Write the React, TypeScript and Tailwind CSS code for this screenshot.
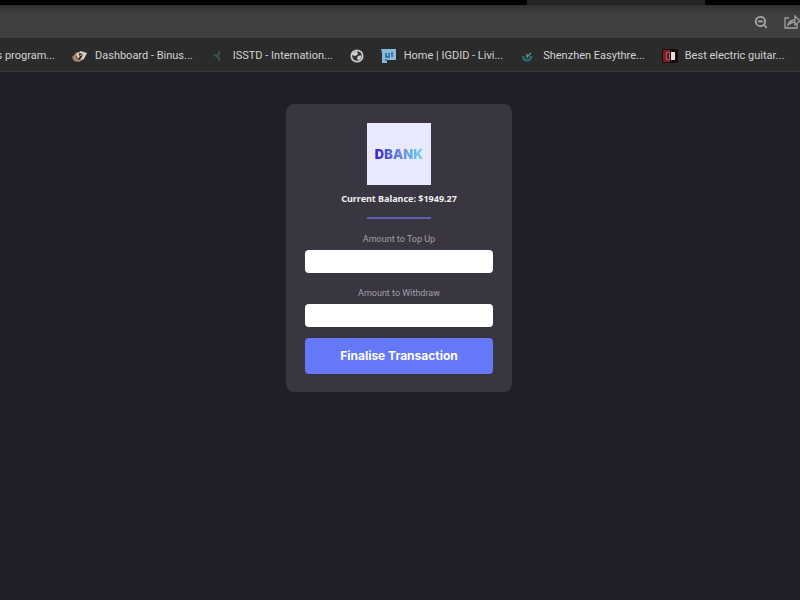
import type { ReactNode } from "react";
import { ZoomOut } from "lucide-react";

function DashboardIcon() {
  return (
    <svg viewBox="0 0 16 16" className="size-4 shrink-0" aria-hidden="true">
      <path d="M0 9 5 4l3 1-4 4 3 3 4-2 1 1-5 3-5-1Z" fill="#a98468" />
      <path d="m4 6 5-3 6 2-3 6-4 1 3-5-3 1-2 3Z" fill="#cfcdc6" />
      <path d="m7 5 4 1-4 2Z" fill="#4b3028" />
    </svg>
  );
}

function FigureIcon() {
  return (
    <svg viewBox="0 0 16 16" className="size-4 shrink-0" aria-hidden="true">
      <path d="M9 3v3L7 8l2 2v3M7 8 4 7" fill="none" stroke="#31584e" strokeWidth="2" />
    </svg>
  );
}

function GlobeIcon() {
  return (
    <svg viewBox="0 0 16 16" className="size-3.5 shrink-0" aria-hidden="true">
      <circle cx="8" cy="8" r="6.500" fill="#333" stroke="#c8c8c8" strokeWidth="2" />
      <path d="M2 5 8 2l1 4-3 2-3-1ZM9 8l4-1v3l-3 3-2-2Z" fill="#cfcfcf" />
    </svg>
  );
}

function BlueIcon() {
  return (
    <svg viewBox="0 0 16 16" className="size-4 shrink-0" aria-hidden="true">
      <path d="M0 1h15v11H6v3H1V5Z" fill="#86b9dc" />
      <path d="M5 5v4h3V5M11 4v5M4 12h2" fill="none" stroke="#2c638f" strokeWidth="1.500" />
    </svg>
  );
}

function TealIcon() {
  return (
    <svg viewBox="0 0 16 16" className="size-4 shrink-0" aria-hidden="true">
      <path d="M3 8c0 6 8 6 8 0" fill="none" stroke="#286e75" strokeWidth="2.500" />
      <path d="m7 9 4-4M7 6v4" fill="none" stroke="#5c9290" strokeWidth="1.500" />
    </svg>
  );
}

function GuitarIcon() {
  return (
    <svg viewBox="0 0 16 16" className="size-4 shrink-0" aria-hidden="true">
      <path d="M0 1h16v14H0Z" fill="#180c0d" />
      <path d="M1 2h7v12H1Z" fill="#7b1d23" />
      <path d="M4 4h4v8H4Z" fill="#a8585d" />
      <path d="M5 5h2v6H5Z" fill="#5b1519" />
      <path d="M9 4h4v8H9Z" fill="#e6e1dc" />
    </svg>
  );
}

function ShareIcon() {
  return (
    <svg viewBox="0 0 16 16" className="size-4 shrink-0" fill="none" stroke="#a0a0a0" strokeWidth="1.300" aria-hidden="true">
      <path d="M5 4H1v10h12v-4M4 11c1-4 3-5 7-5V2l5 5-5 4V8c-3 0-5 1-7 3Z" />
    </svg>
  );
}

function Bookmark({ icon, label }: { icon: ReactNode; label?: string }) {
  return (
    <a
      href="#"
      aria-label={label ?? "Website"}
      className="flex shrink-0 items-center gap-[7px] whitespace-nowrap"
    >
      {icon}
      {label && <span>{label}</span>}
    </a>
  );
}

function Field({ id, label }: { id: string; label: string }) {
  return (
    <div className="flex w-full flex-col items-center">
      <label htmlFor={id} className="font-[Roboto,sans-serif] text-[9px] leading-3 text-[#a19fa8]">
        {label}
      </label>
      <input id={id} type="text" className="mt-[5px] h-[23px] w-full rounded bg-white px-2 text-xs text-black" />
    </div>
  );
}

export default function App() {
  return (
    <div className="flex min-h-screen flex-col overflow-hidden bg-[#211e2a] font-['Noto_Sans',sans-serif]">
      <header>
        <div className="flex h-[5px] bg-black">
          <div className="w-[527px] bg-black" />
          <div className="w-[178px] bg-[#242424]" />
        </div>
        <div className="flex h-[33px] items-center justify-end gap-4 overflow-hidden bg-linear-to-b from-[#303030] to-[#404040] to-30%">
          <button type="button" aria-label="Zoom out" className="shrink-0 text-[#a8a8a8]">
            <ZoomOut className="size-3.5" strokeWidth={3} />
          </button>
          <button type="button" aria-label="Share" className="shrink-0">
            <ShareIcon />
          </button>
        </div>
        <nav
          aria-label="Bookmarks"
          className="flex h-[34px] items-center gap-[17px] overflow-hidden border-b border-[#393939] bg-[#2b2b2b] pt-0.5 font-[Roboto,'Noto_Sans',sans-serif] text-[11px] leading-4 text-[#d2d2d2]"
        >
          <a href="#" className="flex w-[55px] shrink-0 justify-end whitespace-nowrap">
            s program...
          </a>
          <Bookmark icon={<DashboardIcon />} label="Dashboard - Binus..." />
          <Bookmark icon={<FigureIcon />} label="ISSTD - Internation..." />
          <Bookmark icon={<GlobeIcon />} />
          <Bookmark icon={<BlueIcon />} label="Home | IGDID - Livi..." />
          <Bookmark icon={<TealIcon />} label="Shenzhen Easythre..." />
          <Bookmark icon={<GuitarIcon />} label="Best electric guitar..." />
          <a href="#" aria-label="More bookmarks" className="size-4 shrink-0 rounded-sm bg-[#263a68]" />
        </nav>
      </header>

      <main className="flex justify-center pt-8 pr-[18px] pl-4">
        <form
          onSubmit={(event) => event.preventDefault()}
          className="flex w-[226px] flex-col items-center rounded-lg bg-[#393641] px-[19px] pt-[19px] pb-[18px]"
        >
          <div className="flex h-[62px] w-16 items-center justify-center bg-[#e8e9fd]">
            <span className="bg-linear-to-r from-[#3c14c8] via-[#6685d6] to-[#68dbea] bg-clip-text font-[Inter,sans-serif] text-[13px] leading-4 font-black text-transparent">
              DBANK
            </span>
          </div>
          <p className="mt-1.5 text-[9px] leading-4 font-bold text-[#f0f0f2]">Current Balance: $1949.27</p>
          <hr className="mt-2.5 mb-3.5 h-0.5 w-16 border-0 bg-[#5960b0]" />
          <Field id="top-up" label="Amount to Top Up" />
          <div className="h-3.5" />
          <Field id="withdraw" label="Amount to Withdraw" />
          <button
            type="submit"
            className="mt-[11px] h-9 w-full rounded bg-[#6478f8] font-[Inter,sans-serif] text-xs font-bold text-white"
          >
            Finalise Transaction
          </button>
        </form>
      </main>
    </div>
  );
}
